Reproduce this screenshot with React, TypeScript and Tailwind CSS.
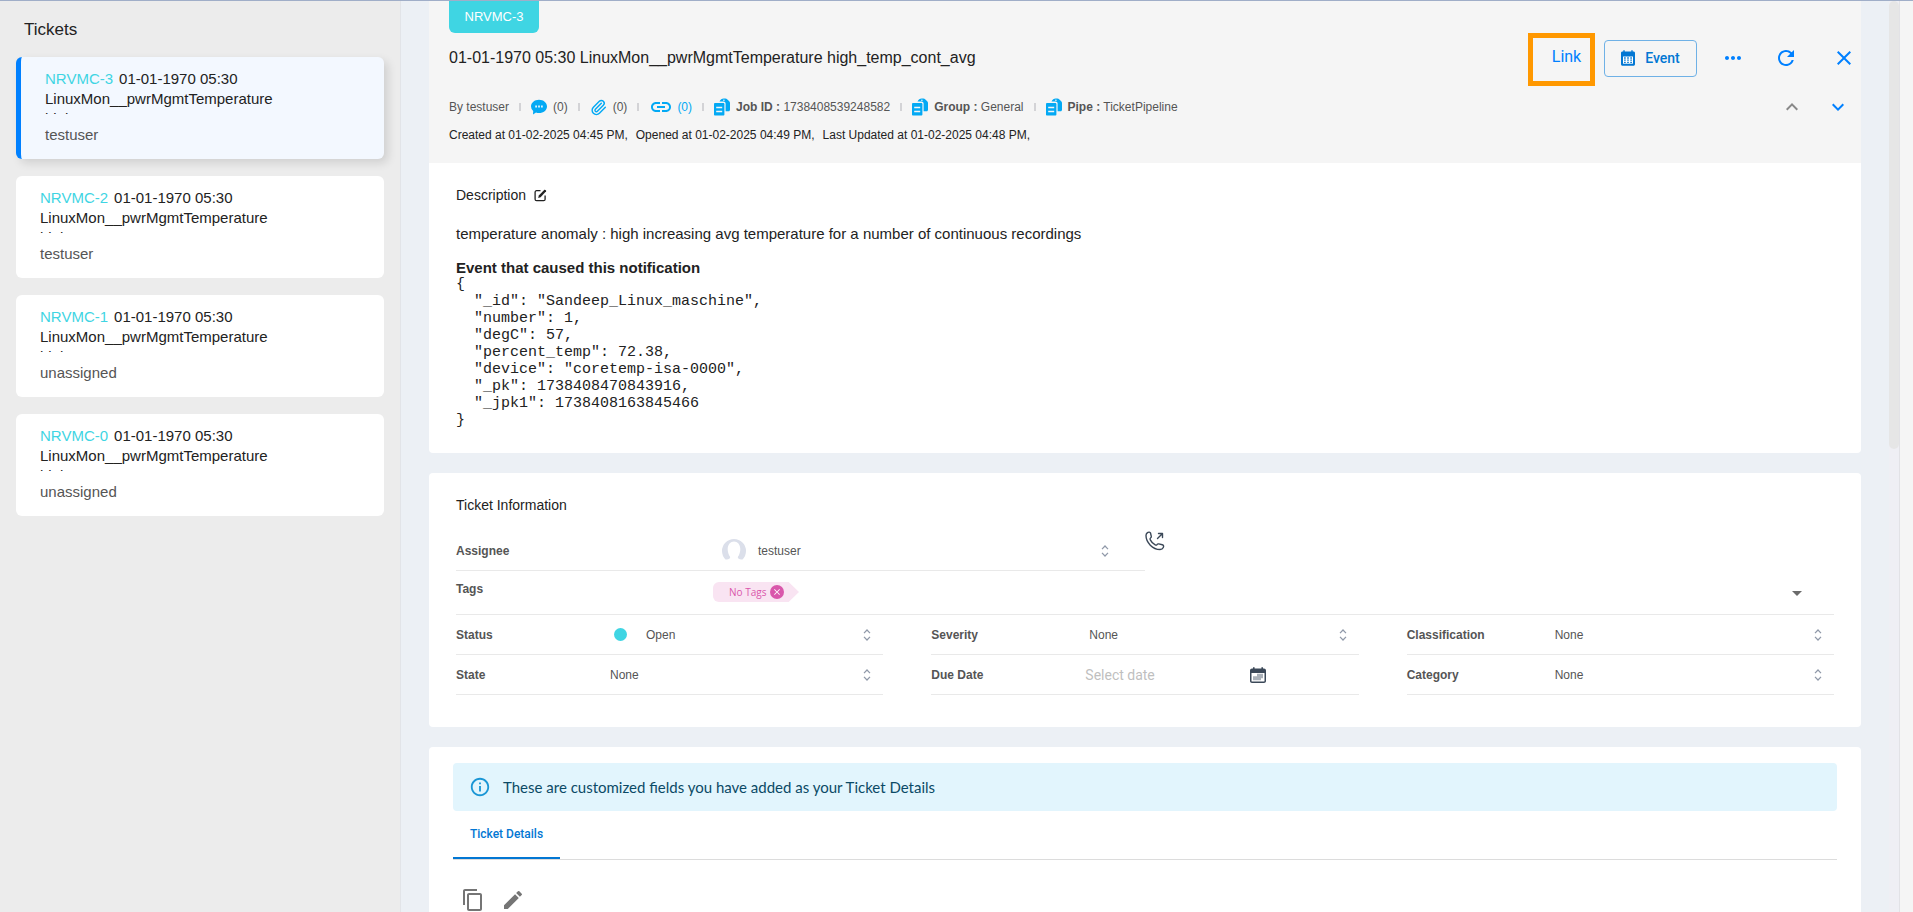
import { useState } from 'react';
import type { ReactNode } from 'react';
import { Paperclip } from 'lucide-react';
import { MdClose, MdContentCopy, MdEdit, MdExpandLess, MdExpandMore, MdLink, MdMoreHoriz, MdRefresh, MdOutlineInfo } from 'react-icons/md';

const tickets = [
  { id: 'NRVMC-3', assignee: 'testuser' },
  { id: 'NRVMC-2', assignee: 'testuser' },
  { id: 'NRVMC-1', assignee: 'unassigned' },
  { id: 'NRVMC-0', assignee: 'unassigned' },
];

const eventJson = `{
  "_id": "Sandeep_Linux_maschine",
  "number": 1,
  "degC": 57,
  "percent_temp": 72.38,
  "device": "coretemp-isa-0000",
  "_pk": 1738408470843916,
  "_jpk1": 1738408163845466
}`;

function ChatIcon() {
  return (
    <svg width="16" height="16" viewBox="0 0 16 16" aria-hidden="true">
      <path d="M8 .8c4.400 0 8 2.900 8 6.600S12.400 14 8 14c-1.100 0-2.100-.1-3-.5L2 15.600l.2-3.600A6.300 6.300 0 0 1 0 7.400C0 3.700 3.600.8 8 .8z" fill="#03a9f4" />
      <path d="M4.200 6.600h1.800v1.800H4.200zM7.100 6.600h1.800v1.800H7.100zM10 6.600h1.800v1.800H10z" fill="#d9f2fd" />
    </svg>
  );
}

function DocsIcon() {
  return (
    <svg width="16" height="18" viewBox="0 0 16 18" aria-hidden="true">
      <path d="M5.500 3.400C6.400 1.800 7.800.5 9.800.5h1.400c1 0 1.600.4 2.200 1l1.800 1.800c.5.500.8 1.100.8 1.800v6.700c0 .9-.6 1.500-1.400 1.500h-3V5.600c0-1.300-.9-2.200-2.200-2.200z" fill="#03a9f4" />
      <circle cx="9.900" cy="2.200" r=".8" fill="#f5f5f5" />
      <path d="M1.200 5h8c.7 0 1.200.5 1.200 1.200v10.300c0 .6-.5 1-1.200 1h-8c-.7 0-1.200-.4-1.200-1V6.200C0 5.500.5 5 1.200 5z" fill="#03a9f4" />
      <path d="M2.200 9.500h6M2.200 13.500h6" stroke="#f5f5f5" strokeWidth="1.300" />
    </svg>
  );
}

function CalendarIcon() {
  return (
    <svg width="14" height="16" viewBox="0 0 14 16" aria-hidden="true">
      <path d="M1.500 1.500h.8V.2h1.400v1.300h6.600V.2h1.400v1.300h.8c.8 0 1.500.6 1.500 1.400v11.300c0 .8-.7 1.500-1.500 1.500h-11C.7 15.700 0 15 0 14.200V2.900c0-.8.700-1.400 1.500-1.400z" fill="#0277d3" />
      <path d="M2 6.500h10v7.200H2z" fill="#fff" />
      <path d="M3.100 8h1.600M6.200 8h1.600M9.300 8h1.600M3.100 10.200h1.600M6.200 10.200h1.600M9.300 10.200h1.600M3.100 12.400h1.600M6.200 12.400h1.600M9.300 12.400h1.600" stroke="#0277d3" strokeWidth="1.300" />
    </svg>
  );
}

function DateIcon() {
  return (
    <svg width="16" height="16" viewBox="0 0 16 16" aria-hidden="true">
      <path d="M2 1.600h1V.2h1.600v1.400h6.800V.2H13v1.400h1c1.100 0 2 .9 2 2V14c0 1.100-.9 2-2 2H2c-1.100 0-2-.9-2-2V3.600c0-1.100.9-2 2-2zM1.500 6v8c0 .4.300.6.600.6h11.800c.3 0 .6-.2.600-.6V6z" fill="#3b4858" fillRule="evenodd" />
      <path d="M7 6.800h6v4.400h-2v2H3V9.200h4z" fill="#aab1b9" />
    </svg>
  );
}

function EditBoxIcon() {
  return (
    <svg width="13" height="13" viewBox="0 0 13 13" aria-hidden="true">
      <path d="M6.500 1.700H2.600c-.9 0-1.500.6-1.500 1.500v7c0 .9.600 1.500 1.500 1.500h7c.9 0 1.500-.6 1.500-1.500V6.500" fill="none" stroke="#222" strokeWidth="1.300" />
      <path d="m4.200 9 .6-2.600L10.400.8c.6-.5 2.200.8 1.700 1.500L6.600 8.200z" fill="#222" />
    </svg>
  );
}

function CallIcon() {
  return (
    <svg width="20" height="20" viewBox="0 0 20 20" fill="none" stroke="#3b4858" strokeWidth="1.400" strokeLinecap="round" strokeLinejoin="round" aria-hidden="true">
      <path d="M2.500 1.600c1-.8 2.700-.6 3 .4l.8 3.300c.2.800-.2 1.300-.8 1.700-.7.500-.6 1.100-.2 1.900 1 2 2.700 3.900 4.900 5 .8.400 1.300.3 1.700-.2.500-.7 1-1 1.800-.8l3.600.9c1.300.3 1.600 1.500 1 2.700-.6 1.300-1.800 2-3.200 2C7.700 18.500 1 11.500 1 4.600c0-1.200.6-2.300 1.500-3zM12.500 7.500 17.500 2.500M13.500 2.500h4V6.500" />
    </svg>
  );
}

function Sorter() {
  return (
    <svg width="8" height="12" viewBox="0 0 8 12" fill="none" stroke="#8f98a8" strokeWidth="1.200" className="shrink-0" aria-hidden="true">
      <path d="M1 4.200 4 1l3 3.200M1 7.800 4 11l3-3.200" />
    </svg>
  );
}

function Avatar() {
  return (
    <svg width="24" height="24" viewBox="0 0 24 24" className="shrink-0" aria-hidden="true">
      <path d="M3.500 20.500A12 12 0 1 1 20.500 20.500c-1.500 0-4-.5-4.500-1.500-.5-1 .4-1.800 1-3 .7-1.500 1.300-3.600 1.300-6 0-4.500-2.800-7.500-6.300-7.500S5.700 5.500 5.700 10c0 2.400.6 4.500 1.300 6 .6 1.200 1.500 2 1 3-.5 1-3 1.500-4.500 1.500z" fill="#dbdfea" />
    </svg>
  );
}

function Divider() {
  return <span className="h-2 w-0.5 bg-[#d3d3d6]" />;
}

type FieldProps = { label: string; className?: string; labelClass: string; children: ReactNode };

function Field({ label, className = '', labelClass, children }: FieldProps) {
  return (
    <div className={`flex h-10 items-center border-b border-[#e9e9e9] ${className}`}>
      <span className={`shrink-0 text-xs font-bold text-[#555] ${labelClass}`}>{label}</span>
      {children}
    </div>
  );
}

function SelectButton({ label, value }: { label: string; value: ReactNode }) {
  return (
    <button type="button" aria-label={label} className="flex h-full flex-1 items-center justify-between pr-3 text-xs text-[#555]">
      {value}
      <Sorter />
    </button>
  );
}

export default function App() {
  const [selected, setSelected] = useState('NRVMC-3');
  const [dueDate, setDueDate] = useState('');

  return (
    <div className="flex h-screen overflow-hidden border-t border-[#a0aec8] bg-[#ecf0f5] font-['Liberation_Sans',Arial,sans-serif] text-[#222]">
      {/* Ticket list */}
      <aside className="w-[401px] shrink-0 border-r border-[#e2e4e8] bg-[#ececec] px-4">
        <h2 className="pt-[17px] pl-2 text-[17px] leading-6">Tickets</h2>
        <ul className="mt-[15px] flex flex-col gap-[17px]">
          {tickets.map((t) => (
            <li key={t.id}>
              <button
                type="button"
                onClick={() => setSelected(t.id)}
                className={`flex h-[102px] w-full flex-col items-start rounded-md pt-3 pl-6 text-left text-[15px] leading-5 ${
                  selected === t.id ? 'border-l-5 border-[#0080ff] bg-[#f3f8ff] shadow-[4px_4px_10px_rgba(0,0,0,0.12)]' : 'bg-white'
                }`}
              >
                <span className="block h-[45px] w-[264px] overflow-hidden">
                  <span className="mr-1.5 text-[#3fd5e3]">{t.id}</span>
                  01-01-1970 05:30 LinuxMon__pwrMgmtTemperature high_temp_cont_avg
                </span>
                <span className="mt-[11px] block text-[#555]">{t.assignee}</span>
              </button>
            </li>
          ))}
        </ul>
      </aside>

      <main className="min-w-0 flex-1 overflow-hidden px-7">
        {/* Ticket header */}
        <header className="h-[162px] bg-[#f5f5f5] pl-5">
          <span className="flex h-8 w-[90px] items-center justify-center rounded-b-md bg-[#3fd5e3] text-[13px] text-white">NRVMC-3</span>
          <div className="flex h-[50px] items-center justify-between pr-[5px]">
            <h1 className="text-base">01-01-1970 05:30 LinuxMon__pwrMgmtTemperature high_temp_cont_avg</h1>
            <div className="flex items-center font-[Roboto,sans-serif] text-[#0080ff]">
              <button type="button" className="mt-0.5 h-[53px] w-[67px] border-5 border-[#ff9800] pb-1 pl-2.5 text-base">Link</button>
              <button type="button" className="ml-[9px] flex h-[37px] w-[93px] items-center justify-center gap-2.5 rounded border border-[#6fb1e6] text-sm font-medium text-[#0277d3]">
                <CalendarIcon />
                Event
              </button>
              <button type="button" aria-label="More" className="ml-6"><MdMoreHoriz size={24} /></button>
              <button type="button" aria-label="Refresh" className="ml-[29px]"><MdRefresh size={24} /></button>
              <button type="button" aria-label="Close" className="ml-[34px]"><MdClose size={24} /></button>
            </div>
          </div>
          <div className="mt-1 flex h-10 items-center justify-between pr-[11px]">
            <div className="flex items-center gap-2.5 text-xs text-[#555]">
              <span>By testuser</span>
              <Divider />
              <span className="flex items-center gap-1.5"><ChatIcon />(0)</span>
              <Divider />
              <span className="flex items-center gap-1.5"><Paperclip size={17} className="text-[#03a9f4]" />(0)</span>
              <Divider />
              <span className="flex items-center gap-1 text-[#03a9f4]"><MdLink size={24} />(0)</span>
              <Divider />
              <span className="flex items-center gap-1.5"><DocsIcon /><span><b>Job ID :</b> 1738408539248582</span></span>
              <Divider />
              <span className="flex items-center gap-1.5"><DocsIcon /><span><b>Group :</b> General</span></span>
              <Divider />
              <span className="flex items-center gap-1.5"><DocsIcon /><span><b>Pipe :</b> TicketPipeline</span></span>
            </div>
            <div className="flex gap-[22px]">
              <button type="button" aria-label="Previous ticket" className="text-[#888]"><MdExpandLess size={24} /></button>
              <button type="button" aria-label="Next ticket" className="text-[#0080ff]"><MdExpandMore size={24} /></button>
            </div>
          </div>
          <p className="flex gap-2 text-xs">
            <span>Created at 01-02-2025 04:45 PM,</span>
            <span>Opened at 01-02-2025 04:49 PM,</span>
            <span>Last Updated at 01-02-2025 04:48 PM,</span>
          </p>
        </header>

        {/* Description */}
        <section className="h-[290px] rounded-b-sm bg-white px-[27px] pt-[22px]">
          <h2 className="flex items-center gap-2 text-sm">
            Description
            <button type="button" aria-label="Edit description"><EditBoxIcon /></button>
          </h2>
          <p className="mt-[19px] text-[15px] leading-5">temperature anomaly : high increasing avg temperature for a number of continuous recordings</p>
          <p className="mt-3.5 text-[15px] leading-5 font-bold">Event that caused this notification</p>
          <pre className="-mt-0.5 font-['Liberation_Mono',monospace] text-[15px] leading-[17px]">{eventJson}</pre>
        </section>

        {/* Ticket information */}
        <section className="mt-5 h-[254px] rounded-sm bg-white px-[27px] pt-[22px]">
          <h2 className="text-sm">Ticket Information</h2>
          <div className="mt-4 flex">
            <Field label="Assignee" className="w-1/2 pr-6" labelClass="w-[266px]">
              <SelectButton label="Assignee" value={<span className="flex items-center gap-3"><Avatar />testuser</span>} />
            </Field>
            <button type="button" aria-label="Call assignee" className="self-start"><CallIcon /></button>
          </div>
          <div className="flex h-11 items-start border-b border-[#e9e9e9]">
            <span className="w-[257px] pt-2.5 text-xs font-bold text-[#555]">Tags</span>
            <span className="mt-[11px] flex h-5 w-[86px] items-center gap-1 rounded-l-md bg-[#f9e4f2] pl-4 font-['Open_Sans',sans-serif] text-[10px] text-[#d957ab] [clip-path:polygon(0_0,88%_0,100%_50%,88%_100%,0_100%)]">
              No Tags
              <button type="button" aria-label="Remove tag" className="flex size-3.5 items-center justify-center rounded-full bg-[#d957ab] text-white"><MdClose size={10} /></button>
            </span>
            <button type="button" aria-label="Open tags" className="mt-5 mr-8 ml-auto">
              <svg width="10" height="5" viewBox="0 0 10 5" aria-hidden="true"><path d="M0 0h10L5 5z" fill="#6b6b6b" /></svg>
            </button>
          </div>
          <div className="grid grid-cols-3 gap-x-12">
            <Field label="Status" labelClass="w-[158px]">
              <SelectButton label="Status" value={<span className="flex items-center gap-[19px]"><i className="size-[13px] rounded-full bg-[#3fd5e3]" />Open</span>} />
            </Field>
            <Field label="Severity" labelClass="w-[158px]"><SelectButton label="Severity" value="None" /></Field>
            <Field label="Classification" labelClass="w-[148px]"><SelectButton label="Classification" value="None" /></Field>
            <Field label="State" labelClass="w-[154px]"><SelectButton label="State" value="None" /></Field>
            <Field label="Due Date" labelClass="w-[154px]">
              <input
                aria-label="Due Date"
                placeholder="Select date"
                value={dueDate}
                onChange={(e) => setDueDate(e.target.value)}
                className="w-[165px] font-[Roboto,sans-serif] text-sm outline-none placeholder:text-[#bfbfbf]"
              />
              <button type="button" aria-label="Pick date"><DateIcon /></button>
            </Field>
            <Field label="Category" labelClass="w-[148px]"><SelectButton label="Category" value="None" /></Field>
          </div>
        </section>

        {/* Customized fields */}
        <section className="mt-5 h-[254px] rounded-t-sm bg-white px-6 pt-4 font-[Lato,sans-serif]">
          <div className="flex h-12 items-center gap-3 rounded bg-[#e2f5fd] pl-4 text-[15px] text-[#0b4a66]">
            <MdOutlineInfo size={22} className="text-[#1a96d5]" />
            These are customized fields you have added as your Ticket Details
          </div>
          <div role="tablist" className="flex h-[49px] items-stretch border-b border-[#dcdcdc]">
            <button type="button" role="tab" aria-selected="true" className="w-[107px] border-b-2 border-[#0277d3] font-[Roboto,sans-serif] text-xs font-medium text-[#0277d3]">
              Ticket Details
            </button>
          </div>
          <div className="mt-7 flex gap-4 pl-2 text-[#757575]">
            <button type="button" aria-label="Copy"><MdContentCopy size={24} /></button>
            <button type="button" aria-label="Edit"><MdEdit size={24} /></button>
          </div>
        </section>
      </main>

      {/* Scroll track */}
      <div className="w-[11px] shrink-0 border-r border-[#e2e2e6] bg-[#efeff4]">
        <div className="h-[448px] rounded-full bg-[#e6e6e6]" />
      </div>
      <div className="w-[13px] shrink-0 bg-[#f5f5f5]" />
    </div>
  );
}
